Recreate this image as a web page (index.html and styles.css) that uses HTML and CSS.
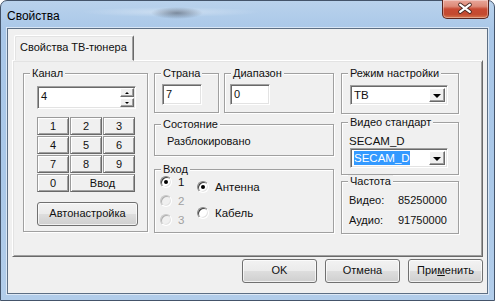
FILE: index.html
```html
<!DOCTYPE html>
<html lang="ru">
<head>
<meta charset="utf-8">
<title>Свойства</title>
<link rel="stylesheet" href="styles.css">
</head>
<body>
<div class="window">
  <div class="titlebar">
    <span class="title">Свойства</span>
    <div class="close">
      <svg width="47" height="19" viewBox="0 0 47 19">
        <path d="M18.5 5.5 L28.5 13 M28.5 5.5 L18.5 13" stroke="#4a2a24" stroke-width="4" stroke-linecap="round" fill="none"/>
        <path d="M18.5 5.5 L28.5 13 M28.5 5.5 L18.5 13" stroke="#ffffff" stroke-width="2.2" stroke-linecap="round" fill="none"/>
      </svg>
    </div>
  </div>
  <div class="client">
    <div class="tabstrip"><div class="tab">Свойства ТВ-тюнера</div></div>
    <div class="panel">
      <div class="col col1">
        <div class="group g-channel">
          <span class="glabel">Канал</span>
          <div class="spin">
            <div class="edit spin-edit">4</div>
            <div class="spin-btns">
              <div class="sbtn"><span class="arr-up"></span></div>
              <div class="sbtn"><span class="arr-down"></span></div>
            </div>
          </div>
          <div class="keypad">
            <div class="key">1</div><div class="key">2</div><div class="key">3</div>
            <div class="key">4</div><div class="key">5</div><div class="key">6</div>
            <div class="key">7</div><div class="key">8</div><div class="key">9</div>
            <div class="key">0</div><div class="key key-wide">Ввод</div>
          </div>
          <div class="btn btn-auto">Автонастройка</div>
        </div>
      </div>
      <div class="col col2">
        <div class="row2">
          <div class="group g-country">
            <span class="glabel">Страна</span>
            <div class="edit small-edit">7</div>
          </div>
          <div class="group g-range">
            <span class="glabel">Диапазон</span>
            <div class="edit small-edit">0</div>
          </div>
        </div>
        <div class="group g-state">
          <span class="glabel">Состояние</span>
          <div class="state-text">Разблокировано</div>
        </div>
        <div class="group g-input">
          <span class="glabel">Вход</span>
          <div class="radios">
            <div class="rcol rcol-a">
              <div class="radio-row"><span class="radio on"></span><span>1</span></div>
              <div class="radio-row disabled"><span class="radio"></span><span>2</span></div>
              <div class="radio-row disabled"><span class="radio"></span><span>3</span></div>
            </div>
            <div class="rcol rcol-b">
              <div class="radio-row"><span class="radio on"></span><span>Антенна</span></div>
              <div class="radio-row"><span class="radio"></span><span>Кабель</span></div>
            </div>
          </div>
        </div>
      </div>
      <div class="col col3">
        <div class="group g-mode">
          <span class="glabel">Режим настройки</span>
          <div class="combo"><div class="combo-val">ТВ</div><div class="dropbtn"><span class="arr-drop"></span></div></div>
        </div>
        <div class="group g-video">
          <span class="glabel">Видео стандарт</span>
          <div class="vs-text">SECAM_D</div>
          <div class="combo"><div class="combo-val"><span class="sel">SECAM_D</span></div><div class="dropbtn"><span class="arr-drop"></span></div></div>
        </div>
        <div class="group g-freq">
          <span class="glabel">Частота</span>
          <div class="freq-row"><span class="fk">Видео:</span><span>85250000</span></div>
          <div class="freq-row"><span class="fk">Аудио:</span><span>91750000</span></div>
        </div>
      </div>
    </div>
    <div class="buttons">
      <div class="btn dbtn">OK</div>
      <div class="btn dbtn">Отмена</div>
      <div class="btn dbtn">При<u>м</u>енить</div>
    </div>
  </div>
</div>
</body>
</html>
```

FILE: styles.css
```css
* { box-sizing: border-box; }
html, body { margin: 0; padding: 0; }
body {
  width: 495px;
  height: 301px;
  overflow: hidden;
  background: #ffffff;
  font-family: "Liberation Sans", Arial, sans-serif;
  font-size: 11px;
  color: #111;
}

.window {
  width: 495px;
  height: 301px;
  display: flex;
  flex-direction: column;
  padding: 0 6px 6px 6px;
  border: 1px solid #44546a;
  border-radius: 7px 7px 0 0;
  background:
    radial-gradient(ellipse 26px 6px at 176px 12px, rgba(60,72,90,0.55), rgba(60,72,90,0) 100%),
    radial-gradient(ellipse 90px 5px at 170px 11px, rgba(255,255,255,0.35), rgba(255,255,255,0) 100%),
    linear-gradient(180deg, #b9d2ec 0%, #a9c7e8 10%, #aac8e8 60%, #b2cdea 100%);
}

.titlebar {
  height: 27px;
  flex: none;
  display: flex;
  align-items: flex-start;
  justify-content: space-between;
}
.title {
  font-size: 12px;
  color: #000;
  margin: 8px 0 0 0;
  line-height: 14px;
}
.close {
  width: 47px;
  height: 19px;
  margin-top: -1px;
  margin-right: -1px;
  border: 1px solid #5a2620;
  border-top: none;
  border-radius: 0 0 5px 5px;
  background: linear-gradient(180deg, #e9a79a 0%, #dd8a78 35%, #c84a33 50%, #c34a30 80%, #d6774f 100%);
  box-shadow: inset 0 0 0 1px rgba(255,255,255,0.35);
  display: flex;
}
.close svg { display: block; margin: -1px 0 0 -1px; }

.client {
  flex: 1;
  background: #f0f0f0;
  border: 1px solid #5d6f84;
  box-shadow: 0 0 0 1px rgba(255,255,255,0.55);
  padding: 6px 4px 0 4px;
  display: flex;
  flex-direction: column;
}

.tabstrip {
  height: 25px;
  display: flex;
  padding-left: 2px;
  position: relative;
  z-index: 1;
}
.tab {
  width: 120px;
  height: 26px;
  background: #f0f0f0;
  border: 1px solid;
  border-color: #ffffff #696969 transparent #ffffff;
  box-shadow: inset 1px 1px #e3e3e3, inset -1px 0 #a0a0a0;
  border-radius: 2px 2px 0 0;
  padding: 5px 0 0 5px;
  line-height: 13px;
}

.panel {
  height: 197px;
  border: 1px solid;
  border-color: #ffffff #696969 #696969 #ffffff;
  box-shadow: inset 1px 1px #e3e3e3, inset -1px -1px #a0a0a0;
  padding: 12px 0 0 10px;
  display: flex;
}

.col { display: flex; flex-direction: column; }
.col1 { width: 125px; }
.col2 { width: 180px; margin-left: 6px; }
.col3 { width: 118px; margin-left: 7px; }

.group {
  position: relative;
  border: 1px solid #a0a0a0;
  box-shadow: inset 1px 1px #ffffff, 1px 1px #ffffff;
}
.glabel {
  position: absolute;
  top: -7px;
  left: 6px;
  padding: 0 2px 0 2px;
  background: #f0f0f0;
  line-height: 13px;
  white-space: nowrap;
}

/* Канал */
.g-channel { height: 159px; padding: 12px 0 0 13px; }
.spin { width: 99px; height: 23px; display: flex; position: relative; }
.edit {
  background: #fff;
  border: 1px solid;
  border-color: #a0a0a0 #ffffff #ffffff #a0a0a0;
  box-shadow: inset 1px 1px #696969, inset -1px -1px #e3e3e3;
  padding: 2px 0 0 3px;
  line-height: 15px;
}
.spin-edit { width: 99px; height: 23px; }
.spin-btns {
  position: absolute;
  right: 2px;
  top: 2px;
  width: 14px;
  height: 19px;
  display: flex;
  flex-direction: column;
  gap: 1px;
}
.sbtn {
  flex: 1;
  background: #f0f0f0;
  border: 1px solid;
  border-color: #ffffff #696969 #696969 #ffffff;
  box-shadow: inset -1px -1px #a0a0a0;
  display: flex;
  align-items: center;
  justify-content: center;
}
.arr-up { width: 0; height: 0; border-left: 2px solid transparent; border-right: 2px solid transparent; border-bottom: 2px solid #000; }
.arr-down { width: 0; height: 0; border-left: 2px solid transparent; border-right: 2px solid transparent; border-top: 2px solid #000; }

.keypad {
  margin-top: 8px;
  width: 99px;
  display: grid;
  grid-template-columns: 32px 32px 32px;
  grid-auto-rows: 18px;
  gap: 1px;
}
.key {
  background: #f0f0f0;
  border: 1px solid;
  border-color: #9a9a9a #696969 #696969 #9a9a9a;
  box-shadow: inset 1px 1px #ffffff, inset -1px -1px #a0a0a0;
  text-align: center;
  line-height: 16px;
}
.key-wide { grid-column: span 2; }

.btn {
  border: 1px solid #707070;
  border-radius: 3px;
  background: linear-gradient(180deg, #f2f2f2 0%, #ebebeb 48%, #dddddd 52%, #cfcfcf 100%);
  box-shadow: inset 0 0 0 1px rgba(255,255,255,0.7);
  text-align: center;
  line-height: 21px;
}
.btn-auto { width: 101px; height: 24px; margin-top: 10px; }

/* col2 */
.row2 { display: flex; gap: 5px; }
.g-country { width: 65px; height: 40px; padding: 10px 0 0 7px; }
.g-range { width: 110px; height: 40px; padding: 10px 0 0 5px; }
.small-edit { width: 40px; height: 21px; }
.g-state { height: 32px; margin-top: 11px; padding: 10px 0 0 12px; }
.state-text { line-height: 13px; }
.g-input { height: 64px; margin-top: 13px; padding: 6px 0 0 5px; }
.radios { display: flex; }
.rcol { display: flex; flex-direction: column; }
.rcol-a { width: 37px; }
.rcol-a .radio-row { height: 19px; }
.rcol-b { padding-top: 5px; }
.rcol-b .radio-row { height: 26px; }
.radio-row { display: flex; align-items: flex-start; gap: 6px; font-size: 11.5px; line-height: 13px; }
.radio {
  width: 12px;
  height: 12px;
  flex: none;
  border-radius: 50%;
  border: 1px solid;
  border-color: #8a8a8a #ffffff #ffffff #8a8a8a;
  background: #fff;
  box-shadow: inset 1px 1px #404040, inset -1px -1px #e3e3e3;
  display: flex;
  align-items: center;
  justify-content: center;
}
.radio.on::after {
  content: "";
  width: 4px;
  height: 4px;
  border-radius: 50%;
  background: #000;
}
.disabled { color: #a0a0a0; }
.disabled .radio { background: #f0f0f0; box-shadow: inset 1px 1px #b0b0b0, inset -1px -1px #e3e3e3; border-color: #c8c8c8 #ffffff #ffffff #c8c8c8; }

/* col3 */
.g-mode { height: 41px; padding: 11px 0 0 8px; }
.combo {
  width: 98px;
  height: 20px;
  background: #fff;
  border: 1px solid;
  border-color: #a0a0a0 #ffffff #ffffff #a0a0a0;
  box-shadow: inset 1px 1px #696969, inset -1px -1px #e3e3e3;
  display: flex;
  padding: 2px;
  font-size: 11.5px;
}
.combo-val { flex: 1; line-height: 15px; padding-left: 1px; }
.dropbtn {
  width: 16px;
  background: #f0f0f0;
  border: 1px solid;
  border-color: #ffffff #696969 #696969 #ffffff;
  box-shadow: inset -1px -1px #a0a0a0;
  display: flex;
  align-items: center;
  justify-content: center;
}
.arr-drop { width: 0; height: 0; border-left: 4px solid transparent; border-right: 4px solid transparent; border-top: 4px solid #000; margin-top: 1px; }
.sel { background: #3399ff; color: #fff; padding: 1px 0; }
.g-video { height: 53px; margin-top: 8px; padding: 12px 0 0 7px; }
.vs-text { font-size: 11.5px; line-height: 13px; }
.g-video .combo { margin-left: 1px; }
.g-freq { height: 53px; margin-top: 6px; padding: 12px 0 0 7px; }
.freq-row { display: flex; height: 20px; line-height: 13px; }
.fk { width: 49px; }

/* dialog buttons */
.buttons {
  display: flex;
  justify-content: flex-end;
  gap: 8px;
  margin-top: 2px;
}
.dbtn { width: 75px; height: 24px; }
u { text-decoration: underline; }
```
